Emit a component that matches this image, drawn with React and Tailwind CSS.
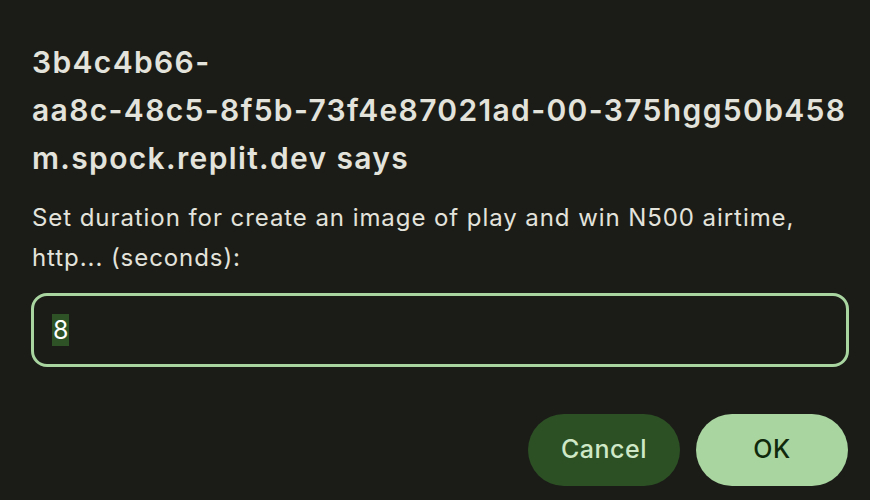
import React from "react";

export default function App() {
  return (
    <div
      className="w-[870px] h-[500px] bg-[#1b1c18] text-[#e3e3dc] pl-[32px] pt-[38px] overflow-hidden"
      style={{ fontFamily: "Inter, 'Noto Sans', sans-serif" }}
    >
      {/* Title */}
      <h1 className="text-[30px] leading-[48px] font-semibold tracking-[1.35px] whitespace-nowrap">
        3b4c4b66-
        <br />
        aa8c-48c5-8f5b-73f4e87021ad-00-375hgg50b458
        <br />
        m.spock.replit.dev says
      </h1>

      {/* Message */}
      <p className="mt-[16px] text-[24px] leading-[40px] tracking-[0.93px] whitespace-nowrap">
        Set duration for create an image of play and win N500 airtime,
        <br />
        http... (seconds):
      </p>

      {/* Input */}
      <div className="mt-[15px] -ml-[1px] h-[74px] w-[818px] rounded-[16px] border-[3px] border-[#a8d5a0] flex items-center pl-[18px]">
        <span className="bg-[#2e5226] text-white text-[25px] leading-[32px] px-[1px]">8</span>
      </div>

      {/* Buttons */}
      <div className="mt-[47px] flex justify-end gap-[16px] w-[816px]">
        <button className="w-[152px] h-[72px] rounded-full bg-[#2c5024] text-[#cfe8c7] text-[25px] font-medium tracking-[0.5px]">
          Cancel
        </button>
        <button className="w-[152px] h-[72px] rounded-full bg-[#a8d5a0] text-[#10290c] text-[25px] font-medium tracking-[0.5px]">
          OK
        </button>
      </div>
    </div>
  );
}
